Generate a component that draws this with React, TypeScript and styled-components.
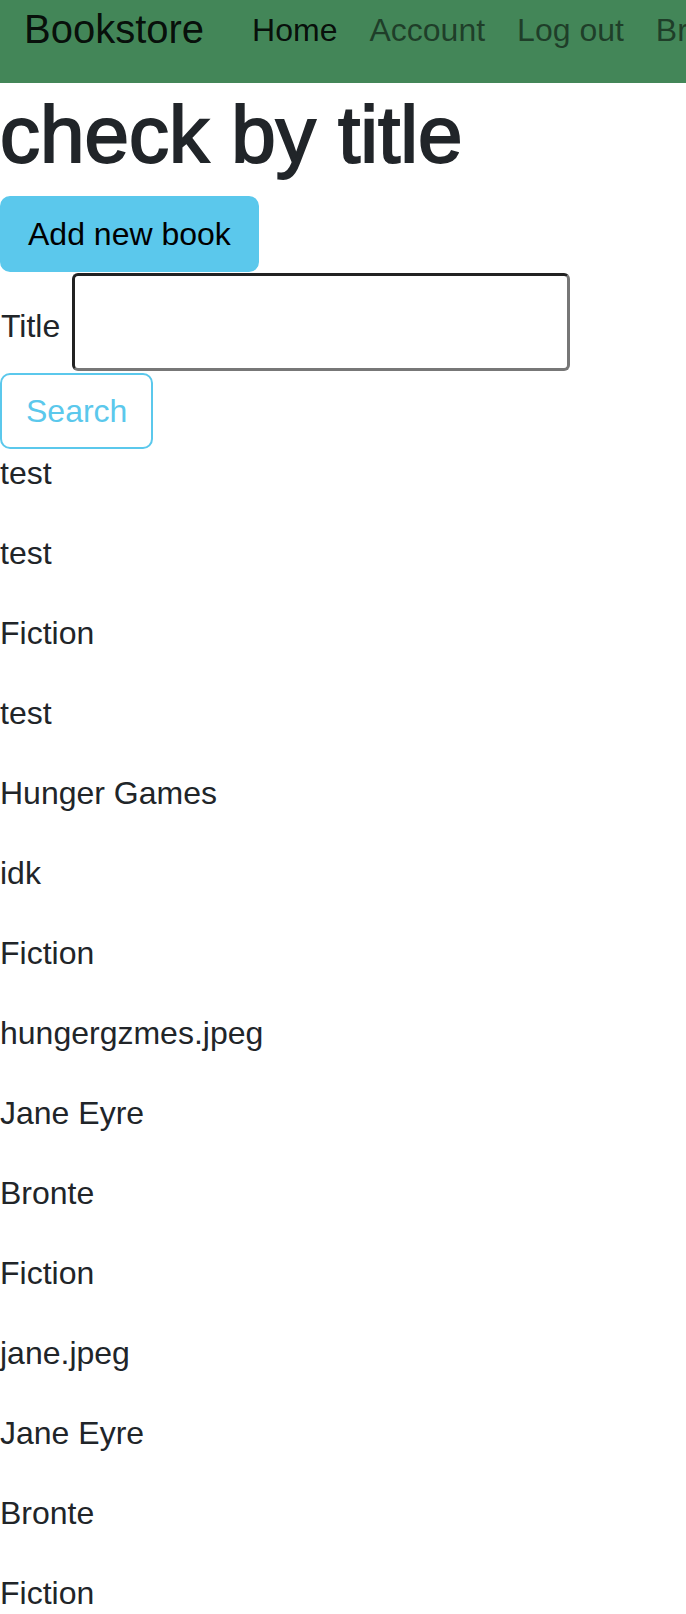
import React from "react";
import styled, { createGlobalStyle } from "styled-components";

const GlobalStyle = createGlobalStyle`
  html, body {
    margin: 0;
    padding: 0;
    overflow-x: hidden;
  }
  body {
    font-family: "Liberation Sans", Arial, sans-serif;
    font-size: 32px;
    line-height: 1.5;
    color: #212529;
    background: #fff;
  }
  * {
    box-sizing: border-box;
  }
`;

const books = [
  "test",
  "test",
  "Fiction",
  "test",
  "Hunger Games",
  "idk",
  "Fiction",
  "hungergzmes.jpeg",
  "Jane Eyre",
  "Bronte",
  "Fiction",
  "jane.jpeg",
  "Jane Eyre",
  "Bronte",
  "Fiction",
];

const links = [
  { label: "Home", active: true },
  { label: "Account", active: false },
  { label: "Log out", active: false },
  { label: "Browse", active: false },
];

export default function App() {
  return (
    <>
      <GlobalStyle />
      <Navbar>
        <NavRow>
          <Brand href="#">Bookstore</Brand>
          {links.map(link => (
            <NavLink key={link.label} href="#" $active={link.active}>
              {link.label}
            </NavLink>
          ))}
        </NavRow>
      </Navbar>
      <Main>
        <Heading>check by title</Heading>
        <div>
          <SolidButton type="button">Add new book</SolidButton>
        </div>
        <SearchForm onSubmit={e => e.preventDefault()}>
          <FieldRow>
            <FieldLabel htmlFor="title">Title</FieldLabel>
            <TitleInput id="title" type="text" />
          </FieldRow>
          <div>
            <OutlineButton type="submit">Search</OutlineButton>
          </div>
        </SearchForm>
        {books.map((text, i) => (
          <Entry key={i}>{text}</Entry>
        ))}
      </Main>
    </>
  );
}

const Navbar = styled.nav`
  height: 83px;
  background: #438658;
  padding: 0 24px;
  overflow: hidden;
`;

const NavRow = styled.div`
  display: flex;
  align-items: center;
  height: 57px;
  white-space: nowrap;
`;

const Brand = styled.a`
  font-size: 40px;
  line-height: 60px;
  color: rgba(0, 0, 0, 0.9);
  text-decoration: none;
  margin-right: 32px;
`;

const NavLink = styled.a<{ $active: boolean }>`
  font-size: 32px;
  line-height: 48px;
  padding: 2px 16px 0;
  text-decoration: none;
  color: ${p => (p.$active ? "rgba(0, 0, 0, 0.9)" : "rgba(0, 0, 0, 0.55)")};
`;

const Main = styled.main`
  display: block;
`;

const Heading = styled.h1`
  margin: 0 0 13px;
  padding-top: 4px;
  font-size: 80px;
  font-weight: 500;
  line-height: 96px;
  -webkit-text-stroke: 2px #212529;
`;

const ButtonBase = styled.button`
  display: inline-block;
  font-family: inherit;
  font-size: 32px;
  line-height: 48px;
  padding: 12px 24px;
  border: 2px solid #5bc8ec;
  border-radius: 10px;
  cursor: pointer;
`;

const SolidButton = styled(ButtonBase)`
  padding: 12px 26px;
  background: #5bc8ec;
  color: #000;
`;

const OutlineButton = styled(ButtonBase)`
  background: #fff;
  color: #5bc8ec;
`;

const SearchForm = styled.form`
  display: flex;
  flex-direction: column;
  gap: 2px;
  margin: 0;
`;

const FieldRow = styled.div`
  display: flex;
  align-items: center;
  gap: 12px;
  padding-top: 1px;
`;

const FieldLabel = styled.label`
  margin-top: 7px;
  padding-left: 1px;
  line-height: 48px;
`;

const TitleInput = styled.input`
  width: 498px;
  height: 98px;
  border: 3px solid;
  border-color: #222 #777 #777 #222;
  border-radius: 6px;
  font-family: inherit;
  font-size: 32px;
  padding: 4px 12px;
  outline: none;
`;

const Entry = styled.p`
  margin: 0 0 32px;
  line-height: 48px;
`;
